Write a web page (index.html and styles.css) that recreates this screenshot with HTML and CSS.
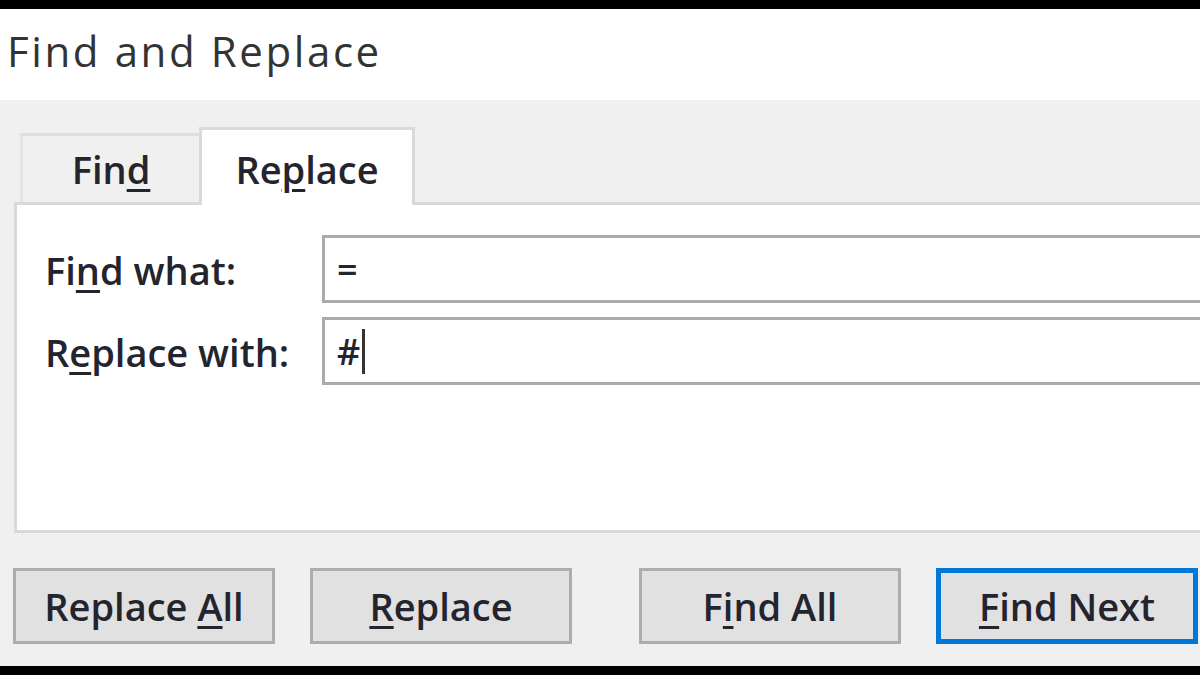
FILE: index.html
```html
<!DOCTYPE html>
<html>
<head>
<meta charset="utf-8">
<link rel="stylesheet" href="styles.css">
</head>
<body>
<div class="frame">
  <div class="topbar"></div>
  <div class="titlebar"><h1 class="title">Find and Replace</h1></div>
  <div class="dialog">
    <div class="tabs">
      <div class="tab"><span>Fin<u>d</u></span></div>
      <div class="tab active"><span>Re<u>p</u>lace</span></div>
    </div>
    <div class="panel">
      <div class="row">
        <label class="label">Fi<u>n</u>d what:</label>
        <div class="input"><span>=</span></div>
      </div>
      <div class="row">
        <label class="label">R<u>e</u>place with:</label>
        <div class="input"><span>#</span><span class="caret"></span></div>
      </div>
    </div>
    <div class="buttons">
      <div class="btn"><span>Replace <u>A</u>ll</span></div>
      <div class="btn"><span><u>R</u>eplace</span></div>
      <div class="btn btn-spaced"><span>F<u>i</u>nd All</span></div>
      <div class="btn default"><span><u>F</u>ind Next</span></div>
    </div>
  </div>
  <div class="bottombar"></div>
</div>
</body>
</html>
```
FILE: styles.css
```css
* { box-sizing: border-box; }
html, body { margin: 0; padding: 0; }
body {
  width: 1200px;
  height: 675px;
  overflow: hidden;
  background: #000;
  font-family: "Open Sans", "Noto Sans", sans-serif;
  color: #24242e;
}
.frame {
  display: flex;
  flex-direction: column;
  height: 675px;
}
.topbar { height: 9px; background: #000; flex: none; }
.bottombar { height: 9px; background: #000; flex: none; }
.titlebar {
  height: 91px;
  background: #fff;
  flex: none;
  display: flex;
  align-items: center;
  padding-left: 7px;
}
.title {
  margin: 0;
  font-weight: 400;
  font-size: 42px;
  letter-spacing: 2.6px;
  color: #333;
  line-height: 1;
  padding-bottom: 8px;
}
.dialog {
  flex: 1;
  background: #f0f0f0;
  padding: 27px 0 0 14px;
  display: flex;
  flex-direction: column;
}
.tabs {
  display: flex;
  align-items: flex-end;
  padding-left: 6px;
  margin-bottom: -3px;
}
.tab {
  font-size: 38px;
  font-weight: 600;
  line-height: 40px;
  text-align: center;
  width: 179px;
  padding: 13px 0 16px;
  border-top: 3px solid #dedede;
  border-left: 3px solid #e4e4e4;
  background: #f0f0f0;
}
.tab.active {
  position: relative;
  z-index: 1;
  width: 216px;
  padding: 19px 0 16px;
  background: #fff;
  border: 3px solid #dadada;
  border-bottom: none;
}
u {
  text-decoration-thickness: 3px;
  text-underline-offset: 5px;
}
.panel {
  height: 331px;
  margin-right: -40px;
  background: #fff;
  border: 3px solid #d9d9d9;
  padding: 30px 0 0 28px;
  display: flex;
  flex-direction: column;
  gap: 14px;
}
.row {
  display: flex;
  align-items: center;
}
.label {
  width: 277px;
  font-size: 38px;
  font-weight: 600;
  line-height: 40px;
  padding-top: 2px;
}
.input {
  flex: 1;
  height: 68px;
  border: 3px solid #a9a9ae;
  background: #fff;
  padding-left: 12px;
  font-size: 36px;
  font-weight: 600;
  display: flex;
  align-items: center;
}
.caret {
  display: inline-block;
  width: 3px;
  height: 45px;
  background: #333;
  margin-left: 2px;
}
.buttons {
  display: flex;
  margin-top: 35px;
}
.btn {
  width: 262px;
  height: 76px;
  border: 3px solid #adadad;
  background: #e1e1e1;
  font-size: 38px;
  font-weight: 600;
  line-height: 40px;
  display: flex;
  align-items: center;
  justify-content: center;
  margin-right: 36px;
  margin-left: -1px;
  white-space: pre;
}
.btn-spaced { margin-left: 31px; }
.btn.default {
  border: 5px solid #0078d7;
  margin-right: 0;
}
```
